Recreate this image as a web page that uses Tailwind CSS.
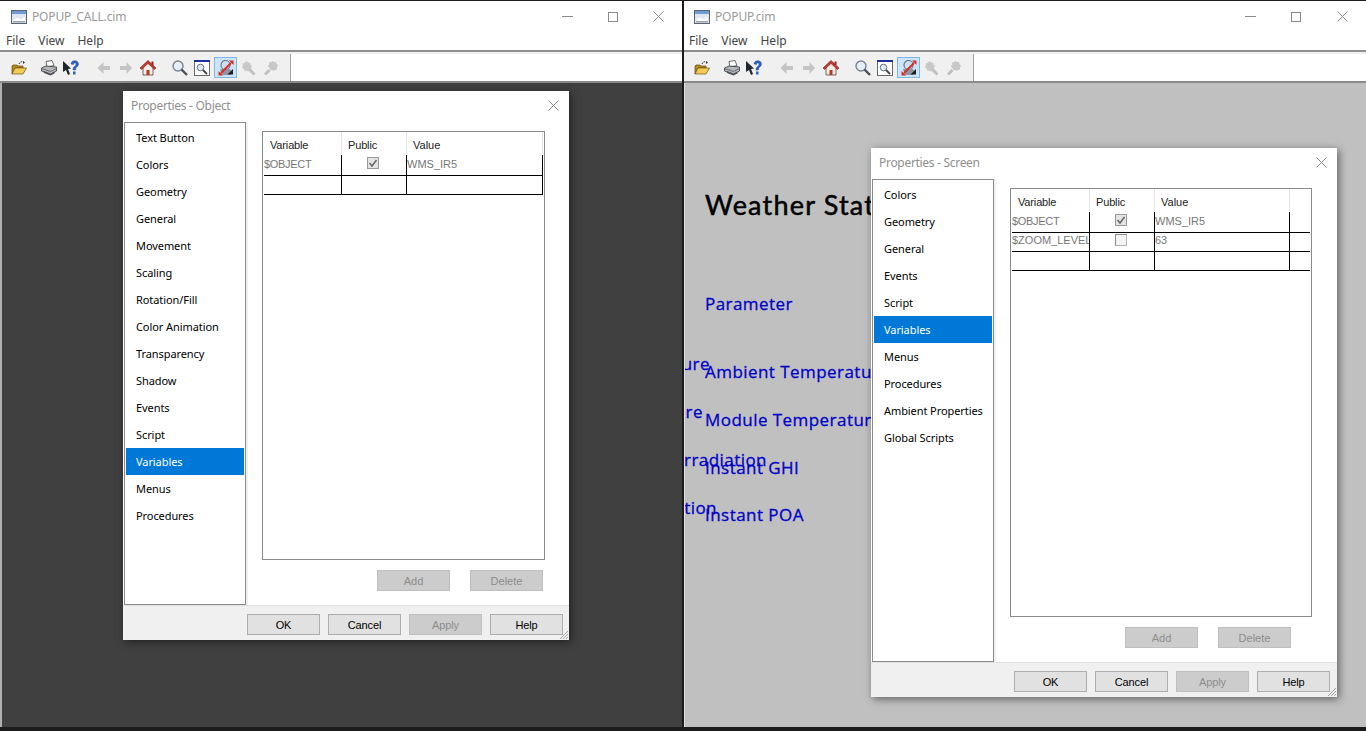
<!DOCTYPE html>
<html lang="en">
<head>
<meta charset="UTF-8">
<title>POPUP</title>
<script src="https://cdn.jsdelivr.net/npm/@tailwindcss/browser@4"></script>
</head>
<body class="bg-[#1c1c1c] overflow-hidden font-['Noto_Sans',sans-serif]">
<svg class="hidden">
  <defs>
    <symbol id="app" viewBox="0 0 16 14"><rect x=".5" y=".5" width="15" height="13" fill="#dfe6f2" stroke="#5d6470"/><rect x="1" y="1" width="14" height="3" fill="#6f9bd8"/><path d="M2 11c3-5 5-3 7-2s3-2 5-2v4z" fill="#fff"/><path d="M2 11h12v1.500H2z" fill="#9aa5b5"/></symbol>
    <symbol id="folder" viewBox="0 0 16 16"><path d="M8 4c1-2.500 3-3 5-1.500" fill="none" stroke="#333" stroke-dasharray="1.500 1"/><path d="M12 1l2 1.500-2 1.500z" fill="#333"/><path d="M1 6l1-1h4l1 1h5v2H4l-3 6z" fill="#b88a1d" stroke="#5f4a10" stroke-width=".7"/><path d="M1 14l3-6h11.500l-3.500 6z" fill="#f2cd55" stroke="#6b5414" stroke-width=".7"/></symbol>
    <symbol id="printer" viewBox="0 0 16 16"><path d="M5 1.500l6-1 2 5-7 1.500z" fill="#fff" stroke="#444" stroke-width=".8"/><path d="M.5 8l4.500-2 10.500 1v4l-6 3.500-9-3.500z" fill="#b4b8be" stroke="#333" stroke-width=".8"/><path d="M.5 8.500l9 3 6-3" fill="none" stroke="#555" stroke-width=".8"/><path d="M3 11l6.500 2.500 4-2v2l-4 2-6.500-2.500z" fill="#4f535a"/></symbol>
    <symbol id="helpq" viewBox="0 0 16 16"><path d="M0 1l8 7.500-3 .5 2 5-2 1-2-5-3 2z" fill="#22272c"/><path d="M8 4c0-4.500 7.500-4.500 7.500 0 0 3-3 2.500-3 6h-2.500c0-4 3-3.500 3-6 0-1.500-2.500-1.500-2.500.5z" fill="#2b62c4" stroke="#163c86" stroke-width=".4"/><rect x="10" y="11.500" width="2.500" height="3" fill="#2b62c4"/></symbol>
    <symbol id="back" viewBox="0 0 14 14"><path d="M.5 7l6-6v4H13v4H6.500v4z" fill="#c4c4c4"/></symbol>
    <symbol id="forward" viewBox="0 0 14 14"><path d="M13 7L7.500 1v4H1v4h6.500v4z" fill="#c4c4c4"/></symbol>
    <symbol id="home" viewBox="0 0 16 16"><path d="M8 1.500L1 8h2v7h10V8h2z" fill="#f1ece4" stroke="#4a2a22" stroke-width=".7"/><path d="M8 .500L0 8l1.500 1.500L8 3.500l6.500 6L16 8z" fill="#c9392f" stroke="#6c1b16" stroke-width=".6"/><rect x="6.500" y="10" width="3" height="5" fill="#b33a2b"/><rect x="11.500" y="1.500" width="2" height="3.500" fill="#8a2a22"/></symbol>
    <symbol id="magnifier" viewBox="0 0 16 16"><circle cx="6" cy="6" r="5" fill="#e4eef8" stroke="#7a838f" stroke-width="1.400"/><path d="M9.500 9.500l5.500 5.500" stroke="#4c5158" stroke-width="2.400"/></symbol>
    <symbol id="zoomwin" viewBox="0 0 16 16"><rect x=".5" y=".5" width="15" height="15" fill="#fff" stroke="#6a6a6a"/><rect x="0" y="0" width="16" height="2" fill="#1a2fa0"/><circle cx="6.500" cy="7.500" r="3.300" fill="#dbe9f7" stroke="#6b7480"/><path d="M9 10l4 4" stroke="#3f444a" stroke-width="1.800"/></symbol>
    <symbol id="zoomfit" viewBox="0 0 16 16"><circle cx="7.500" cy="5" r="4.500" fill="#cfe0f2" stroke="#6f7680" stroke-width="1.200"/><path d="M2 9h10l2 3-2 3H4z" fill="#8c96a3"/><path d="M3 13L13 3" stroke="#d62a24" stroke-width="1.800"/><path d="M15.500.500v4.500l-4.500-4.500zM.5 15.500v-4.500l4.500 4.500z" fill="#d62a24"/><path d="M9.500 14.500l5.500-5.500v5.500z" fill="#1d1d1d"/></symbol>
    <symbol id="zoomgrey1" viewBox="0 0 16 16"><path d="M6.500 1l1.500 1.500h2l.5 2 1.500 1.500-1 2 .5 2-2 .5-1.500 1-1.500-1-2 .5-.5-2-2-1.500 1-2-.5-2 2-.5z" fill="#c8c8c8"/><path d="M9.500 9.500l5 5" stroke="#c0c0c0" stroke-width="3"/></symbol>
    <symbol id="zoomgrey2" viewBox="0 0 16 16"><path d="M9.500 1l1.500 1 2 0 .5 2 1.500 1.500-1 2 0 2-2 .5-1.500 1-1.500-1-2 0-.5-2-1.500-1.500 1-2 0-2 2-.5z" fill="#c8c8c8"/><path d="M6.500 10l-4.500 4.500" stroke="#c0c0c0" stroke-width="3"/></symbol>
  </defs>
</svg>

<!-- left window -->
<div class="absolute left-0 top-px w-[682px] h-[726px] bg-white flex flex-col overflow-hidden">
  <div class="h-[31px] flex items-center shrink-0">
    <svg class="w-4 h-[14px] ml-[11px]"><use href="#app"/></svg>
    <span class="ml-[5px] text-[12px] tracking-[-0.15px] text-[#9a9a9a]">POPUP_CALL.cim</span>
    <div class="ml-auto flex items-center">
      <div class="w-[11px] h-px bg-[#8a8a8a] mr-[35px]"></div>
      <div class="w-[10px] h-[10px] border border-[#8a8a8a] mr-[35px]"></div>
      <svg class="w-[11px] h-[11px] mr-[18px]" viewBox="0 0 11 11"><path d="M.5.500l10 10M10.500.500l-10 10" stroke="#8a8a8a" fill="none"/></svg>
    </div>
  </div>
  <div class="h-[18px] flex items-center gap-[13px] pl-[6px] text-[12px] text-[#444] shrink-0">
    <span>File</span><span>View</span><span>Help</span>
  </div>
  <div class="h-[4px] bg-[#f0f0f0] border-t-2 border-[#8e8e8e] shrink-0"></div>
  <div class="h-[29px] flex bg-white border-b-2 border-[#8a8a8a] shrink-0">
    <div class="w-[291px] bg-[#f0f0f0] border-r border-[#a0a0a0] flex items-center">
      <svg class="w-4 h-4 ml-[11px]"><use href="#folder"/></svg>
      <svg class="w-4 h-4 ml-[14px]"><use href="#printer"/></svg>
      <svg class="w-4 h-4 ml-[6px]"><use href="#helpq"/></svg>
      <svg class="w-[14px] h-[14px] ml-[18px]"><use href="#back"/></svg>
      <svg class="w-[14px] h-[14px] ml-2"><use href="#forward"/></svg>
      <svg class="w-4 h-4 ml-[7px]"><use href="#home"/></svg>
      <svg class="w-4 h-4 ml-[16px]"><use href="#magnifier"/></svg>
      <svg class="w-4 h-4 ml-[6px]"><use href="#zoomwin"/></svg>
      <div class="w-[23px] h-[21px] ml-[4px] bg-[#cce4f7] border border-[#7fb8e6] flex items-center justify-center"><svg class="w-4 h-4"><use href="#zoomfit"/></svg></div>
      <svg class="w-4 h-4 ml-[3px]"><use href="#zoomgrey1"/></svg>
      <svg class="w-4 h-4 ml-[7px]"><use href="#zoomgrey2"/></svg>
    </div>
  </div>
  <div class="flex-1 bg-[#404040] border-l-2 border-[#b0b0b0]"></div>
</div>

<!-- right window -->
<div class="absolute left-[684px] top-px w-[682px] h-[726px] bg-white flex flex-col overflow-hidden">
  <div class="h-[31px] flex items-center shrink-0">
    <svg class="w-4 h-[14px] ml-[10px]"><use href="#app"/></svg>
    <span class="ml-[5px] text-[12px] tracking-[-0.15px] text-[#9a9a9a]">POPUP.cim</span>
    <div class="ml-auto flex items-center">
      <div class="w-[11px] h-px bg-[#8a8a8a] mr-[35px]"></div>
      <div class="w-[10px] h-[10px] border border-[#8a8a8a] mr-[36px]"></div>
      <svg class="w-[11px] h-[11px] mr-[18px]" viewBox="0 0 11 11"><path d="M.5.500l10 10M10.500.500l-10 10" stroke="#8a8a8a" fill="none"/></svg>
    </div>
  </div>
  <div class="h-[18px] flex items-center gap-[13px] pl-[5px] text-[12px] text-[#444] shrink-0">
    <span>File</span><span>View</span><span>Help</span>
  </div>
  <div class="h-[4px] bg-[#f0f0f0] border-t-2 border-[#8e8e8e] shrink-0"></div>
  <div class="h-[29px] flex bg-white border-b-2 border-[#8a8a8a] shrink-0">
    <div class="w-[290px] bg-[#f0f0f0] border-r border-[#a0a0a0] flex items-center">
      <svg class="w-4 h-4 ml-[10px]"><use href="#folder"/></svg>
      <svg class="w-4 h-4 ml-[14px]"><use href="#printer"/></svg>
      <svg class="w-4 h-4 ml-[6px]"><use href="#helpq"/></svg>
      <svg class="w-[14px] h-[14px] ml-[18px]"><use href="#back"/></svg>
      <svg class="w-[14px] h-[14px] ml-2"><use href="#forward"/></svg>
      <svg class="w-4 h-4 ml-[7px]"><use href="#home"/></svg>
      <svg class="w-4 h-4 ml-[16px]"><use href="#magnifier"/></svg>
      <svg class="w-4 h-4 ml-[6px]"><use href="#zoomwin"/></svg>
      <div class="w-[23px] h-[21px] ml-[4px] bg-[#cce4f7] border border-[#7fb8e6] flex items-center justify-center"><svg class="w-4 h-4"><use href="#zoomfit"/></svg></div>
      <svg class="w-4 h-4 ml-[3px]"><use href="#zoomgrey1"/></svg>
      <svg class="w-4 h-4 ml-[7px]"><use href="#zoomgrey2"/></svg>
    </div>
  </div>
  <div class="flex-1 bg-[#c0c0c0] border-l border-[#e0e0e0] relative overflow-hidden font-['Open_Sans',sans-serif] text-[17px] leading-6 tracking-[0.45px] [-webkit-text-stroke:0.3px_#0000c8] text-[#0000c8] whitespace-nowrap">
    <!-- screen canvas objects, clipped left and covered by the dialog -->
    <span class="absolute left-[20px] top-[104px] text-[27px] leading-[36px] tracking-[1.2px] [-webkit-text-stroke:0.5px_#000] text-black font-['Lato',sans-serif]">Weather Station</span>
    <span class="absolute left-[20px] top-[209px]">Parameter</span>
    <span class="absolute left-[-175px] top-[269px] w-[200px] text-right">Ambient Temperature</span>
    <span class="absolute left-[20px] top-[277px]">Ambient Temperature</span>
    <span class="absolute left-[-182px] top-[317px] w-[200px] text-right">Module Temperature</span>
    <span class="absolute left-[20px] top-[325px]">Module Temperature</span>
    <span class="absolute left-[-118px] top-[365px] w-[200px] text-right">Instant Irradiation</span>
    <span class="absolute left-[20px] top-[373px]">Instant GHI</span>
    <span class="absolute left-[-168px] top-[413px] w-[200px] text-right">Instant Radiation</span>
    <span class="absolute left-[20px] top-[420px]">Instant POA</span>
  </div>
</div>

<!-- left dialog -->
<div class="absolute left-[123px] top-[91px] w-[446px] h-[549px] bg-white flex flex-col shadow-[2px_2px_8px_rgba(0,0,0,0.5)]">
  <div class="h-[31px] flex items-center justify-between pl-2 pr-[10px] pb-[2px] shrink-0">
    <span class="text-[12px] tracking-[-0.3px] text-[#8f8f8f]">Properties - Object</span>
    <svg class="w-[11px] h-[11px]" viewBox="0 0 11 11"><path d="M.5.500l10 10M10.500.500l-10 10" stroke="#8a8a8a" fill="none"/></svg>
  </div>
  <div class="flex-1 flex min-h-0">
    <div class="w-[122px] ml-px border border-[#8c8c8c] p-px flex flex-col shrink-0 text-[11px] tracking-[-0.08px] text-black">
      <div class="h-[27px] flex items-center pl-[10px] pt-[2px]">Text Button</div>
      <div class="h-[27px] flex items-center pl-[10px] pt-[2px]">Colors</div>
      <div class="h-[27px] flex items-center pl-[10px] pt-[2px]">Geometry</div>
      <div class="h-[27px] flex items-center pl-[10px] pt-[2px]">General</div>
      <div class="h-[27px] flex items-center pl-[10px] pt-[2px]">Movement</div>
      <div class="h-[27px] flex items-center pl-[10px] pt-[2px]">Scaling</div>
      <div class="h-[27px] flex items-center pl-[10px] pt-[2px]">Rotation/Fill</div>
      <div class="h-[27px] flex items-center pl-[10px] pt-[2px]">Color Animation</div>
      <div class="h-[27px] flex items-center pl-[10px] pt-[2px]">Transparency</div>
      <div class="h-[27px] flex items-center pl-[10px] pt-[2px]">Shadow</div>
      <div class="h-[27px] flex items-center pl-[10px] pt-[2px]">Events</div>
      <div class="h-[27px] flex items-center pl-[10px] pt-[2px]">Script</div>
      <div class="h-[27px] flex items-center pl-[10px] pt-[2px] bg-[#0078d7] text-white">Variables</div>
      <div class="h-[27px] flex items-center pl-[10px] pt-[2px]">Menus</div>
      <div class="h-[27px] flex items-center pl-[10px] pt-[2px]">Procedures</div>
    </div>
    <div class="flex-1 border-l-2 border-[#f0f0f0] pl-[14px] pt-[9px] font-['Liberation_Sans',sans-serif] text-[11px]">
      <div class="w-[283px] h-[429px] border border-[#8a8a8a] pl-px">
        <div class="h-[23px] flex text-[#222] leading-[27px]">
          <div class="w-[78px] pl-[6px] border-r border-[#e4e4e4] tracking-[-0.15px]">Variable</div>
          <div class="w-[65px] pl-[6px] border-r border-[#e4e4e4] tracking-[-0.15px]">Public</div>
          <div class="w-[136px] pl-[6px] border-r border-[#e4e4e4]">Value</div>
        </div>
        <div class="w-[279px] h-[21px] flex text-[#777] border-b border-black leading-[18px]">
          <div class="w-[78px] border-r border-black tracking-[-0.3px]">$OBJECT</div>
          <div class="w-[65px] border-r border-black flex pl-[25px] pt-[2px]"><div class="w-[12px] h-[12px] bg-[#e4e4e4] border border-[#9a9a9a] flex items-center justify-center"><svg class="w-[10px] h-[10px]" viewBox="0 0 10 10"><path d="M1.500 5l2.500 3 4.500-6" stroke="#666" stroke-width="1.500" fill="none"/></svg></div></div>
          <div class="w-[136px] border-r border-black">WMS_IR5</div>
        </div>
        <div class="w-[279px] h-[19px] flex border-b border-black">
          <div class="w-[78px] border-r border-black"></div>
          <div class="w-[65px] border-r border-black"></div>
          <div class="w-[136px] border-r border-black"></div>
        </div>
      </div>
      <div class="flex justify-end gap-[20px] w-[281px] mt-[10px]">
        <div class="w-[73px] h-[21px] bg-[#cccccc] border border-[#bfbfbf] text-[#8c8c8c] text-center leading-[20px]">Add</div>
        <div class="w-[73px] h-[21px] bg-[#cccccc] border border-[#bfbfbf] text-[#8c8c8c] text-center leading-[20px]">Delete</div>
      </div>
    </div>
  </div>
  <div class="h-[35px] bg-[#f0f0f0] border-t border-[#e0e0e0] relative flex items-start justify-end gap-[8px] pt-[8px] pr-[6px] shrink-0 font-['Liberation_Sans',sans-serif] text-[11px] tracking-[-0.1px]">
    <div class="w-[73px] h-[21px] bg-[#e1e1e1] border border-[#adadad] text-black text-center leading-[20px]">OK</div>
    <div class="w-[73px] h-[21px] bg-[#e1e1e1] border border-[#adadad] text-black text-center leading-[20px]">Cancel</div>
    <div class="w-[73px] h-[21px] bg-[#cccccc] border border-[#bfbfbf] text-[#8c8c8c] text-center leading-[20px]">Apply</div>
    <div class="w-[73px] h-[21px] bg-[#e1e1e1] border border-[#adadad] text-black text-center leading-[20px]">Help</div>
    <svg class="absolute right-0 bottom-0 w-[12px] h-[12px]" viewBox="0 0 12 12"><path d="M11 3l-8 8M11 6l-5 5M11 9l-2 2" stroke="#a0a0a0" fill="none"/></svg>
  </div>
</div>

<!-- right dialog -->
<div class="absolute left-[871px] top-[148px] w-[466px] h-[549px] bg-white flex flex-col shadow-[2px_2px_8px_rgba(0,0,0,0.5)]">
  <div class="h-[31px] flex items-center justify-between pl-2 pr-[10px] pb-[2px] shrink-0">
    <span class="text-[12px] tracking-[-0.3px] text-[#8f8f8f]">Properties - Screen</span>
    <svg class="w-[11px] h-[11px]" viewBox="0 0 11 11"><path d="M.5.500l10 10M10.500.500l-10 10" stroke="#8a8a8a" fill="none"/></svg>
  </div>
  <div class="flex-1 flex min-h-0">
    <div class="w-[122px] ml-px border border-[#8c8c8c] p-px flex flex-col shrink-0 text-[11px] tracking-[-0.08px] text-black">
      <div class="h-[27px] flex items-center pl-[10px] pt-[2px]">Colors</div>
      <div class="h-[27px] flex items-center pl-[10px] pt-[2px]">Geometry</div>
      <div class="h-[27px] flex items-center pl-[10px] pt-[2px]">General</div>
      <div class="h-[27px] flex items-center pl-[10px] pt-[2px]">Events</div>
      <div class="h-[27px] flex items-center pl-[10px] pt-[2px]">Script</div>
      <div class="h-[27px] flex items-center pl-[10px] pt-[2px] bg-[#0078d7] text-white">Variables</div>
      <div class="h-[27px] flex items-center pl-[10px] pt-[2px]">Menus</div>
      <div class="h-[27px] flex items-center pl-[10px] pt-[2px]">Procedures</div>
      <div class="h-[27px] flex items-center pl-[10px] pt-[2px]">Ambient Properties</div>
      <div class="h-[27px] flex items-center pl-[10px] pt-[2px]">Global Scripts</div>
    </div>
    <div class="flex-1 border-l-2 border-[#f0f0f0] pl-[14px] pt-[9px] font-['Liberation_Sans',sans-serif] text-[11px]">
      <div class="w-[302px] h-[429px] border border-[#8a8a8a] pl-px">
        <div class="h-[23px] flex text-[#222] leading-[27px]">
          <div class="w-[78px] pl-[6px] border-r border-[#e4e4e4] tracking-[-0.15px]">Variable</div>
          <div class="w-[65px] pl-[6px] border-r border-[#e4e4e4] tracking-[-0.15px]">Public</div>
          <div class="w-[135px] pl-[6px] border-r border-[#e4e4e4]">Value</div>
        </div>
        <div class="w-[298px] h-[21px] flex text-[#777] border-b border-black leading-[18px]">
          <div class="w-[78px] border-r border-black tracking-[-0.3px]">$OBJECT</div>
          <div class="w-[65px] border-r border-black flex pl-[25px] pt-[2px]"><div class="w-[12px] h-[12px] bg-[#e4e4e4] border border-[#9a9a9a] flex items-center justify-center"><svg class="w-[10px] h-[10px]" viewBox="0 0 10 10"><path d="M1.500 5l2.500 3 4.500-6" stroke="#666" stroke-width="1.500" fill="none"/></svg></div></div>
          <div class="w-[135px] border-r border-black">WMS_IR5</div>
        </div>
        <div class="w-[298px] h-[19px] flex text-[#777] border-b border-black leading-[14px]">
          <div class="w-[78px] border-r border-black whitespace-nowrap overflow-hidden">$ZOOM_LEVEL</div>
          <div class="w-[65px] border-r border-black flex pl-[25px] pt-px"><div class="w-[12px] h-[12px] bg-[#f4f4f4] border border-[#b4b4b4] border-t-[#8a8a8a] border-l-[#8a8a8a]"></div></div>
          <div class="w-[135px] border-r border-black">63</div>
        </div>
        <div class="w-[298px] h-[19px] flex border-b border-black">
          <div class="w-[78px] border-r border-black"></div>
          <div class="w-[65px] border-r border-black"></div>
          <div class="w-[135px] border-r border-black"></div>
        </div>
      </div>
      <div class="flex justify-end gap-[20px] w-[281px] mt-[10px]">
        <div class="w-[73px] h-[21px] bg-[#cccccc] border border-[#bfbfbf] text-[#8c8c8c] text-center leading-[20px]">Add</div>
        <div class="w-[73px] h-[21px] bg-[#cccccc] border border-[#bfbfbf] text-[#8c8c8c] text-center leading-[20px]">Delete</div>
      </div>
    </div>
  </div>
  <div class="h-[35px] bg-[#f0f0f0] border-t border-[#e0e0e0] relative flex items-start justify-end gap-[8px] pt-[8px] pr-[7px] shrink-0 font-['Liberation_Sans',sans-serif] text-[11px] tracking-[-0.1px]">
    <div class="w-[73px] h-[21px] bg-[#e1e1e1] border border-[#adadad] text-black text-center leading-[20px]">OK</div>
    <div class="w-[73px] h-[21px] bg-[#e1e1e1] border border-[#adadad] text-black text-center leading-[20px]">Cancel</div>
    <div class="w-[73px] h-[21px] bg-[#cccccc] border border-[#bfbfbf] text-[#8c8c8c] text-center leading-[20px]">Apply</div>
    <div class="w-[73px] h-[21px] bg-[#e1e1e1] border border-[#adadad] text-black text-center leading-[20px]">Help</div>
    <svg class="absolute right-0 bottom-0 w-[12px] h-[12px]" viewBox="0 0 12 12"><path d="M11 3l-8 8M11 6l-5 5M11 9l-2 2" stroke="#a0a0a0" fill="none"/></svg>
  </div>
</div>
</body>
</html>
